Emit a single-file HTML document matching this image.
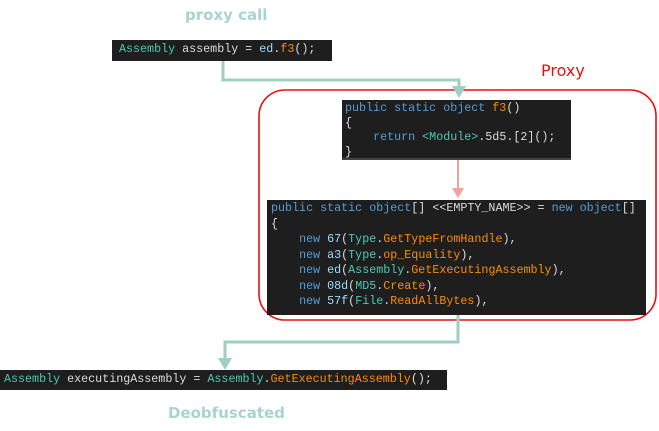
<!DOCTYPE html>
<html><head><style>
body{margin:0;width:659px;height:431px;background:#fff;position:relative;overflow:hidden;font-family:"Liberation Mono",monospace;}
.box{position:absolute;background:#1e1e1e;font-size:11.7px;color:#dcdcdc;white-space:pre;line-height:15.5px;}
.t{color:#4ec9b0}.k{color:#569cd6}.m{color:#ff8c00}.v{color:#dcdcdc}.p{color:#9cdcfe}
.lbl{position:absolute;font-family:"DejaVu Sans",sans-serif;font-weight:bold;color:#a8d5cb;font-size:15px;}
</style></head><body>
<svg width="659" height="431" style="position:absolute;left:0;top:0">
<rect x="259" y="90" width="397" height="230" rx="26" fill="none" stroke="#e81010" stroke-width="1.6"/>
<polyline points="223,60 223,80 459,80 459,90" fill="none" stroke="#9fcfc3" stroke-width="3"/>
<polygon points="452,86 466,86 459,98" fill="#9fcfc3"/>
<line x1="458" y1="160" x2="458" y2="192" stroke="#f2a0a0" stroke-width="2"/>
<polygon points="452,188 464,188 458,198" fill="#f2a0a0"/>
<polyline points="458,315 458,342 225,342 225,362" fill="none" stroke="#9fcfc3" stroke-width="3"/>
<polygon points="218,358 232,358 225,370" fill="#9fcfc3"/>
</svg>
<div class="lbl" style="left:185px;top:6px">proxy call</div>
<div class="lbl" style="left:541px;top:61px;color:#e81010;font-weight:normal;font-size:16px">Proxy</div>
<div class="lbl" style="left:168px;top:404px">Deobfuscated</div>
<div class="box" style="left:112px;top:40px;width:220px;height:21px;padding:2px 0 0 7px;box-sizing:border-box"><span class="t">Assembly</span> assembly = <span class="p">ed</span>.<span class="m">f3</span>();</div>
<div class="box" style="left:342px;top:100px;width:229px;height:60px;padding:1px 0 0 3px;box-sizing:border-box;line-height:14.5px;border-bottom:2px solid #444"><span class="k">public static object</span> <span class="m">f3</span>()
{
    <span class="k">return</span> <span class="t">&lt;Module&gt;</span>.5d5.[2]();
}</div>
<div class="box" style="left:267px;top:200px;width:379px;height:115px;padding:1px 0 0 4px;box-sizing:border-box"><span class="k">public static object</span>[] &lt;&lt;EMPTY_NAME&gt;&gt; = <span class="k">new object</span>[]
{
    <span class="k">new</span> <span class="p">67</span>(<span class="t">Type</span>.<span class="m">GetTypeFromHandle</span>),
    <span class="k">new</span> <span class="p">a3</span>(<span class="t">Type</span>.<span class="m">op_Equality</span>),
    <span class="k">new</span> <span class="p">ed</span>(<span class="t">Assembly</span>.<span class="m">GetExecutingAssembly</span>),
    <span class="k">new</span> <span class="p">08d</span>(<span class="t">MD5</span>.<span class="m">Create</span>),
    <span class="k">new</span> <span class="p">57f</span>(<span class="t">File</span>.<span class="m">ReadAllBytes</span>),</div>
<div class="box" style="left:0;top:370px;width:447px;height:20px;padding:2px 0 0 4px;box-sizing:border-box"><span class="t">Assembly</span> executingAssembly = <span class="t">Assembly</span>.<span class="m">GetExecutingAssembly</span>();</div>
</body></html>
